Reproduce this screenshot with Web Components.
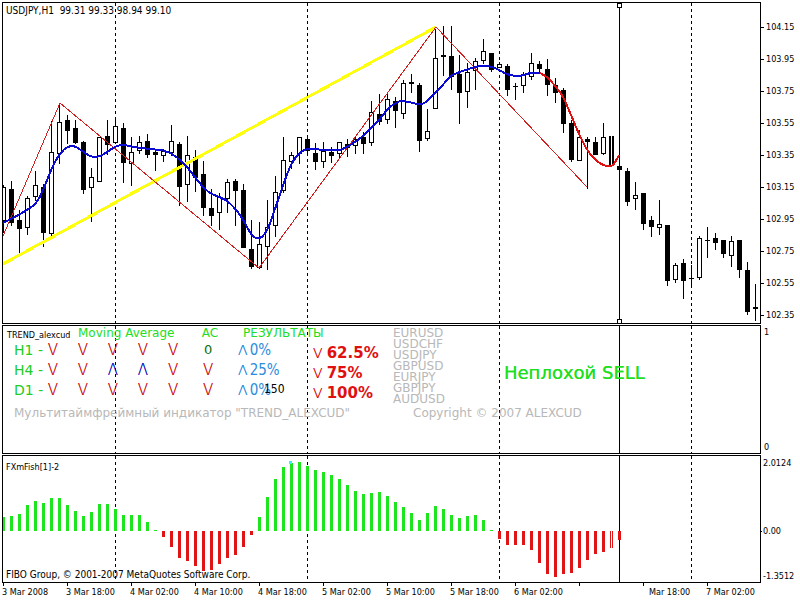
<!DOCTYPE html>
<html lang="ru">
<head>
<meta charset="utf-8">
<title>USDJPY,H1</title>
<style>
html, body { height: 100%; margin: 0; background: #fff; }
body { font: 10px/12px "DejaVu Sans Condensed", "DejaVu Sans", sans-serif; color: #000; }
</style>
</head>
<body>
<trading-terminal></trading-terminal>
<script>
const CROSS = 619;
const DAYS = [115, 307, 499, 691];
const xOf = k => 3 + 8 * k;

/* index, high, low, body top, body bottom, hollow */
const CANDLES = [
[0,185,232,187,220,1],[1,181,225,189,222,0],[2,210,255,220,228,0],[3,196,234,198,227,1],[4,171,200,185,196,1],
[5,184,246,187,232,0],[6,121,237,152,233,1],[7,103,163,122,153,1],[8,115,143,120,130,0],[9,120,143,128,142,0],
[10,141,193,142,189,0],[11,168,221,177,187,1],[12,137,181,137,181,1],[13,120,154,136,144,0],[14,117,142,126,142,1],
[15,123,182,128,162,0],[16,137,185,152,163,1],[17,136,153,142,150,1],[18,134,157,141,154,0],[19,150,170,152,154,0],
[20,149,161,151,155,1],[21,125,155,141,152,1],[22,142,205,144,186,0],[23,136,201,155,184,1],[24,150,191,157,177,0],
[25,161,215,174,207,0],[26,189,225,208,215,0],[27,193,229,197,212,1],[28,179,212,182,198,1],[29,179,225,181,190,0],
[30,184,247,190,247,0],[31,220,268,249,266,0],[32,222,268,244,267,1],[33,200,269,227,246,1],[34,176,236,192,225,1],
[35,137,192,160,190,1],[36,152,168,155,161,1],[37,137,163,137,153,1],[38,135,152,139,150,0],[39,143,169,153,161,0],
[40,142,167,151,161,1],[41,147,162,152,155,0],[42,142,158,142,153,1],[43,139,156,144,147,0],[44,136,153,139,145,1],
[45,132,153,137,143,0],[46,101,145,112,142,1],[47,94,124,114,121,0],[48,94,123,99,119,1],[49,97,127,101,110,0],
[50,80,118,83,113,1],[51,74,92,82,83,0],[52,83,151,85,140,0],[53,109,140,131,138,1],[54,27,108,58,108,1],
[55,26,75,55,56,0],[56,26,89,56,76,0],[57,55,123,74,92,0],[58,63,107,72,91,1],[59,58,89,61,70,1],
[60,39,63,51,60,1],[61,53,71,53,69,0],[62,62,67,64,67,1],[63,64,95,66,89,0],[64,83,99,86,86,0],
[65,72,92,74,85,1],[66,53,79,63,76,1],[67,61,72,64,68,0],[68,59,95,69,84,0],[69,78,102,85,92,0],
[70,88,132,90,123,0],[71,120,161,123,159,0],[72,130,160,137,160,1],[73,137,188,139,141,0],[74,137,154,142,154,0],
[75,123,154,137,153,1],[77,166,170,166,169,0],[78,168,205,171,201,0],[79,182,209,195,198,1],[80,193,229,193,223,0],
[81,216,236,220,226,0],[82,200,234,224,227,1],[83,225,285,225,280,0],[84,263,282,265,279,1],[85,259,298,263,280,0],
[86,265,285,278,278,0],[87,236,279,238,277,1],[88,227,257,240,240,0],[89,233,249,238,242,0],[90,240,257,240,253,0],
[91,236,266,241,255,1],[92,240,277,240,269,0],[93,262,314,270,311,0],[94,284,320,307,308,0]];

const AVERAGE = [[3,223],[20,214],[35,204],[43,190],[52,168],[60,154],[68,147],[76,147],[90,156],[100,156],[115,147],[123,145],
[134,147],[150,149],[165,151],[175,156],[185,165],[195,177],[204,188],[212,194],[227,201],[240,215],[252,235],[260,238],[268,228],
[276,206],[285,180],[292,163],[300,153],[308,149],[325,150],[339,150],[352,144],[364,135],[378,121],[388,109],[396,103],[403,101],
[419,104],[427,101],[440,88],[451,76],[460,72],[475,67],[486,66],[495,68],[507,74],[518,76],[531,73],[540,73]];
const FALLING = [[540,73],[548,78],[555,86],[563,97],[571,115],[580,136],[588,151],[597,161],[606,166],[613,165],[619,155]];

/* end of each bar, measured from the zero line at y = 531 */
const FISH = [517,516,514,505,501,503,498,498,505,511,516,512,504,504,509,515,515,515,522,530,537,547,558,561,566,571,570,564,
558,555,547,535,517,497,479,467,463,462,466,470,472,475,479,485,491,494,493,492,496,502,507,513,520,513,506,509,515,518,516,515,
520,530,539,545,545,545,550,563,574,577,574,573,568,560,554,552,548,540];

function smooth(p) {
  let d = `M${p[0]}`;
  for (let i = 0; i < p.length - 1; i++) {
    const a = p[i - 1] || p[i], b = p[i], c = p[i + 1], e = p[i + 2] || c;
    d += `C${b[0] + (c[0] - a[0]) / 6} ${b[1] + (c[1] - a[1]) / 6} ${c[0] - (e[0] - b[0]) / 6} ${c[1] - (e[1] - b[1]) / 6} ${c}`;
  }
  return d;
}

function guides(top, bottom) {
  const days = DAYS.map(x => `<path d="M${x + .5} ${top}V${bottom}" stroke="#000" stroke-dasharray="3 3"/>`).join("");
  return days + `<path d="M${CROSS + .5} ${top}V${bottom}" stroke="#000"/>`;
}

function priceArt() {
  const candles = CANDLES.map(([k, h, l, t, b, hollow]) => {
    const x = xOf(k);
    const body = hollow
      ? `<rect x="${x - 1.5}" y="${t + .5}" width="4" height="${b - t}" fill="#fff" stroke="#000"/>`
      : `<rect x="${x - 2}" y="${t}" width="5" height="${b - t + 1}"/>`;
    return `<rect x="${x}" y="${h}" width="1" height="${l - h + 1}"/>${body}`;
  }).join("");
  return `<g shape-rendering="crispEdges" fill="#000">${guides(3, 323)}${candles}
    <rect x="609" y="136" width="2" height="30"/><rect x="612" y="136" width="2" height="30"/></g>
    <g fill="none" shape-rendering="crispEdges">
      <path d="M3 264L436 27" stroke="#ffff10" stroke-width="3"/>
      <path d="M3 236L60 103L259 268L436 27L587 187" stroke="#d02020"/>
      <path d="${smooth(AVERAGE)}" stroke="#0a0ad0" stroke-width="2"/>
      <path d="${smooth(FALLING)}" stroke="#e01010" stroke-width="2"/>
    </g>
    <g fill="#fff" stroke="#000" shape-rendering="crispEdges">
      <rect x="617.5" y="3.5" width="4" height="4"/><rect x="617.5" y="319.5" width="4" height="4"/></g>`;
}

function fishArt() {
  const bars = FISH.map((y, k) => {
    const x = xOf(k), up = y < 531, fill = up ? "#1ee61e" : "#e01414";
    if (k === 76) return `<rect x="610" y="531" width="1" height="17" fill="${fill}"/><rect x="612" y="531" width="1" height="17" fill="${fill}"/>`;
    return `<rect x="${x - 1}" y="${Math.min(y, 531)}" width="3" height="${Math.abs(y - 531)}" fill="${fill}"/>`;
  }).join("");
  return `<g shape-rendering="crispEdges">${guides(456, 582)}${bars}<rect x="289" y="461" width="3" height="3" fill="#3cf0f0"/></g>`;
}

const ART = {
  price: ["3 3 757 320", priceArt()],
  trend: ["3 326 757 127", `<g shape-rendering="crispEdges">${guides(326, 453)}</g>`],
  fish: ["3 456 757 126", fishArt()]
};

function define(name, html, setup) {
  const template = document.createElement("template");
  template.innerHTML = html;
  customElements.define(name, class extends HTMLElement {
    constructor() {
      super();
      this.attachShadow({ mode: "open" }).append(template.content.cloneNode(true));
    }
    connectedCallback() { if (setup) setup(this, this.shadowRoot); }
  });
}

define("chart-panel", `
<style>
:host { display: grid; grid-template-columns: minmax(0, 1fr) 39px; min-height: 0; }
.plot { display: grid; border: 1px solid #000; min-height: 0; overflow: hidden; }
.plot > * { grid-area: 1 / 1; min-width: 0; min-height: 0; }
svg { width: 100%; height: 100%; display: block; }
.content { z-index: 1; }
</style>
<div class="plot"><svg preserveAspectRatio="none" aria-hidden="true"></svg><div class="content"><slot></slot></div></div>
<slot name="scale"></slot>`, (host, root) => {
  const [box, art] = ART[host.getAttribute("art")];
  const svg = root.querySelector("svg");
  svg.setAttribute("viewBox", box);
  svg.innerHTML = art;
});

define("value-scale", `
<style>
:host { display: flex; flex-direction: column; justify-content: space-between; padding: 1px 0 1px 3px; font-size: 9px; }
:host([kind="price"]) { padding: 19px 0 3px 0; }
:host([kind="fish"]) { display: grid; grid-template-rows: 68fr 45fr 12px; padding: 2px 0 1px 0; }
span { display: flex; align-items: center; height: 12px; white-space: nowrap; }
:host([kind="price"]) span::before, span.tick::before { content: ""; width: 3px; height: 1px; background: #000; margin-right: 2px; }
:host([kind="fish"]) span { padding-left: 2px; }
:host([kind="fish"]) span.tick { padding: 0; }
:host([kind="fish"]) span.tick::before { width: 1px; margin-right: 1px; }
</style>`, (host, root) => {
  host.getAttribute("values").split(" ").forEach(v => {
    const s = document.createElement("span");
    s.textContent = v;
    if (v === "0.00") s.className = "tick";
    root.append(s);
  });
});

define("time-scale", `
<style>
:host { display: grid; grid-template-columns: repeat(12, minmax(0, 1fr)); padding-right: 30px; font-size: 9px; }
span { position: relative; padding-top: 3px; line-height: 12px; white-space: nowrap; }
span::before { content: ""; position: absolute; left: 1px; top: 0; width: 1px; height: 3px; background: #000; }
.cut { padding-left: 7px; }
</style>`, (host, root) => {
  ["3 Mar 2008", "3 Mar 18:00", "4 Mar 02:00", "4 Mar 10:00", "4 Mar 18:00", "5 Mar 02:00", "5 Mar 10:00",
   "5 Mar 18:00", "6 Mar 02:00", "", "Mar 18:00", "7 Mar 02:00"].forEach(t => {
    const s = document.createElement("span");
    s.textContent = t;
    if (t.startsWith("Mar")) s.className = "cut";
    root.append(s);
  });
});

define("trend-table", `
<style>
:host { display: block; position: relative; }
table { border-collapse: collapse; table-layout: fixed; width: 387px; font: 12px/14px "DejaVu Sans", sans-serif; }
th, td { padding: 0; height: 20px; line-height: 18px; text-align: center; font-weight: 400; white-space: nowrap; }
thead th { height: 14px; line-height: 14px; color: #22dd22; }
.titles { display: flex; gap: 4px; padding-left: 4px; }
.name { font: 9px/18px "DejaVu Sans Condensed", sans-serif; color: #000; height: 14px; width: 67px; text-align: left; }
thead .results { text-align: left; padding-left: 15px; }
tbody th { color: #22cc22; font-size: 14px; text-align: left; padding-left: 11px; }
i { font-style: normal; font-size: 14px; line-height: 1px; }
.down, .up, i { font-weight: 200; text-shadow: 0 0 currentColor; }
.down { color: #d01818; font-size: 15px; }
.up { color: #1414c0; font-size: 15px; }
.flat { color: #0a700a; font-size: 13px; }
.bull { font-family: "DejaVu Sans Condensed", "DejaVu Sans", sans-serif; font-size: 15px; color: #2a8cdc; text-align: left; padding-left: 10px; }
.bull i { font-family: "DejaVu Sans", sans-serif; margin-right: 2px; }
.bear { font-size: 15px; font-weight: 700; color: #e01010; text-align: left; padding: 6px 0 0 3px; height: 14px; line-height: 14px; }
.bear i { margin-right: 4px; }
.count { position: absolute; left: 261px; top: 56px; font: 12px/14px "DejaVu Sans Condensed", sans-serif; color: #000; }
</style>
<table>
<colgroup><col style="width:35px"><col style="width:30px"><col style="width:30px"><col style="width:30px"><col style="width:30px"><col style="width:30px"><col style="width:40px"><col style="width:82px"><col style="width:80px"></colgroup>
<thead><tr><th colspan="6"><div class="titles"><span class="name">TREND_alexcud</span><span>Moving Average</span></div></th><th>&nbsp;AC</th><th class="results" colspan="2">РЕЗУЛЬТАТЫ</th></tr></thead>
<tbody></tbody></table>
<span class="count">150</span>`, (host, root) => {
  const cls = { V: "down", "Λ": "up", 0: "flat" };
  root.querySelector("tbody").innerHTML = [["H1", "VVVVV0", "0%", "62.5%"], ["H4", "VVΛΛVV", "25%", "75%"], ["D1", "VVVVVV", "0%", "100%"]]
    .map(([n, s, a, b]) => `<tr><th scope="row">${n} -</th>${[...s].map(c => `<td class="${cls[c]}">${c}</td>`).join("")}<td class="bull"><i>Λ</i>${a}</td><td class="bear"><i>V</i>${b}</td></tr>`).join("");
});

define("trend-board", `
<style>
:host { display: grid; grid-template-columns: 390px 111px 1fr; font: 12px/14px "DejaVu Sans", sans-serif; color: #b8b8b8; }
ul { margin: 0; padding: 2px 0 0; list-style: none; line-height: 11px; }
.signal { align-self: center; padding-top: 14px; color: #1ee01e; font-size: 18px; line-height: 20px; white-space: nowrap; text-shadow: 0 0 currentColor; }
footer { grid-column: 1 / -1; display: grid; grid-template-columns: 399px 1fr; padding-left: 11px; line-height: 16px; white-space: nowrap; }
</style>
<trend-table></trend-table>
<ul><li>EURUSD</li><li>USDCHF</li><li>USDJPY</li><li>GBPUSD</li><li>EURJPY</li><li>GBPJPY</li><li>AUDUSD</li></ul>
<div class="signal">Неплохой SELL</div>
<footer><span>Мультитаймфреймный индикатор "TREND_ALEXCUD"</span><span>Copyright © 2007 ALEXCUD</span></footer>`);

define("panel-notes", `
<style>
:host { display: flex; flex-direction: column; justify-content: space-between; height: 100%; box-sizing: border-box; padding: 2px 3px 1px; white-space: pre; }
::slotted(*) { display: block; }
</style><slot></slot>`);

define("trading-terminal", `
<style>
:host { display: grid; grid-template-rows: 322fr 129fr 128fr 16px; row-gap: 1px; height: 100vh; min-height: 420px; box-sizing: border-box; padding: 2px 0 0 2px; }
time-scale { margin-top: -1px; }
.fish { padding-top: 3px; font-size: 9px; }
</style>
<chart-panel art="price"><panel-notes><span>USDJPY,H1  99.31 99.33 98.94 99.10</span></panel-notes>
<value-scale slot="scale" kind="price" values="104.15 103.95 103.75 103.55 103.35 103.15 102.95 102.75 102.55 102.35"></value-scale></chart-panel>
<chart-panel art="trend"><trend-board></trend-board><value-scale slot="scale" kind="trend" values="1 0"></value-scale></chart-panel>
<chart-panel art="fish"><panel-notes><span class="fish">FXmFish[1]-2</span><span>FIBO Group, © 2001-2007 MetaQuotes Software Corp.</span></panel-notes>
<value-scale slot="scale" kind="fish" values="2.0124 0.00 -1.3512"></value-scale></chart-panel>
<time-scale></time-scale>`);
</script>
</body>
</html>
